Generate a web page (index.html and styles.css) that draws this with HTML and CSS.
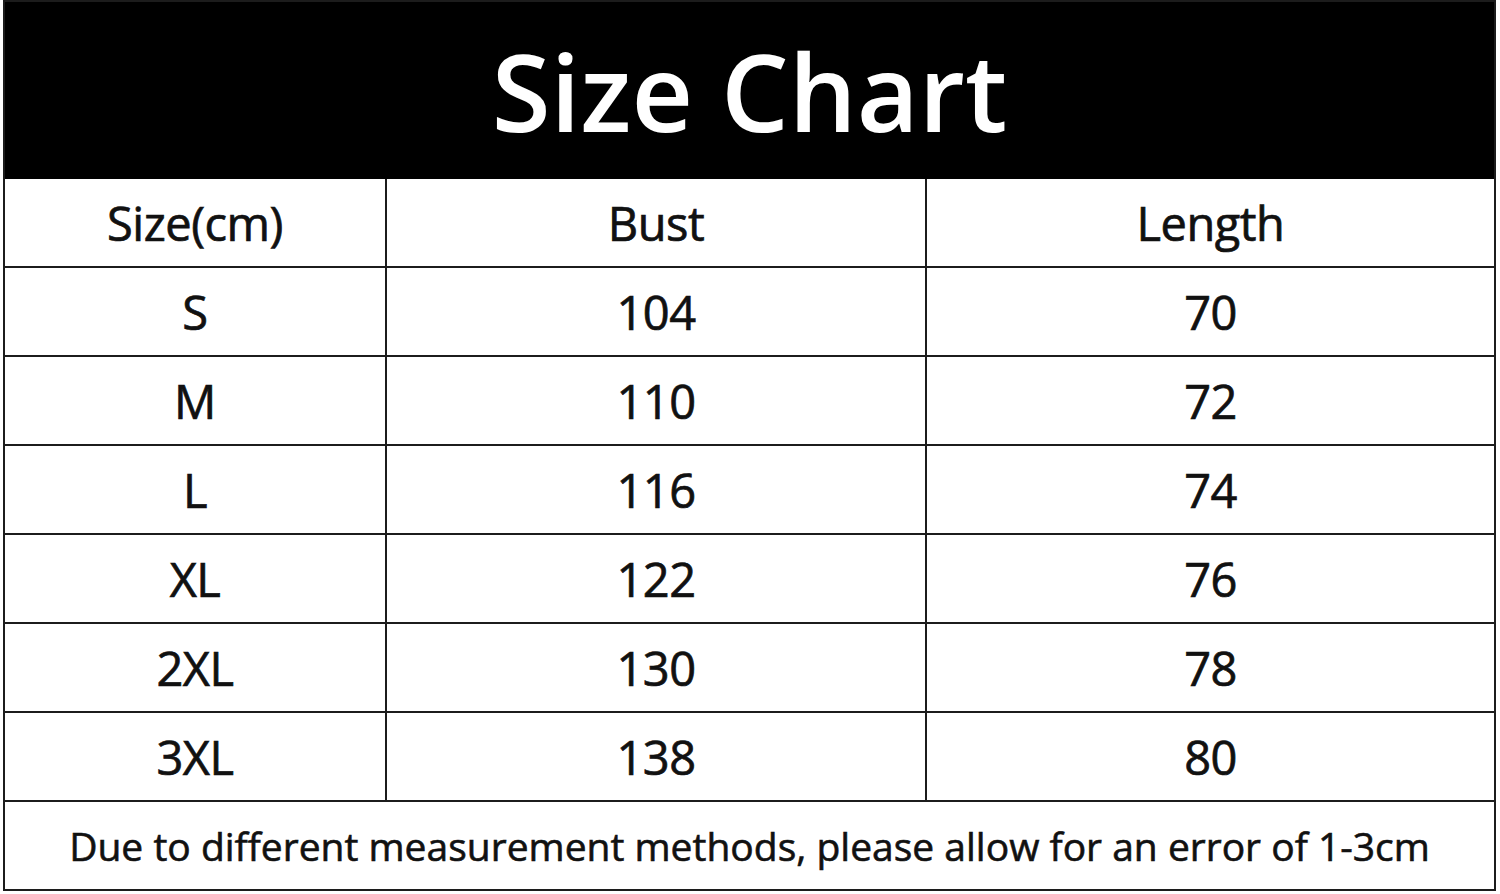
FILE: index.html
```html
<!DOCTYPE html>
<html>
<head>
<meta charset="utf-8">
<link rel="stylesheet" href="styles.css">
</head>
<body>
<div class="chart">
  <div class="title">Size Chart</div>
  <div class="grid">
    <div class="cell">Size(cm)</div><div class="cell">Bust</div><div class="cell">Length</div>
    <div class="cell">S</div><div class="cell">104</div><div class="cell">70</div>
    <div class="cell">M</div><div class="cell">110</div><div class="cell">72</div>
    <div class="cell">L</div><div class="cell">116</div><div class="cell">74</div>
    <div class="cell">XL</div><div class="cell">122</div><div class="cell">76</div>
    <div class="cell">2XL</div><div class="cell">130</div><div class="cell">78</div>
    <div class="cell">3XL</div><div class="cell">138</div><div class="cell">80</div>
  </div>
  <div class="note">Due to different measurement methods, please allow for an error of 1-3cm</div>
</div>
</body>
</html>
```
FILE: styles.css
```css
html, body {
  margin: 0;
  padding: 0;
  background: #fff;
}
body {
  font-family: "Open Sans", "Noto Sans", sans-serif;
  color: #111;
}
.chart {
  margin: 0 0 0 3px;
  width: 1489px;
  border: 2px solid #1c1c1c;
}
.title {
  height: 177px;
  background: #000;
  color: #fff;
  font-size: 107px;
  font-weight: 600;
  display: flex;
  align-items: center;
  justify-content: center;
  line-height: 1;
}
.grid {
  display: grid;
  grid-template-columns: 382px 540px 567px;
  grid-auto-rows: 89px;
}
.cell {
  display: flex;
  align-items: center;
  justify-content: center;
  font-size: 47px;
  letter-spacing: -0.5px;
  -webkit-text-stroke: 0.7px #111;
  border-bottom: 2px solid #1c1c1c;
  border-right: 2px solid #1c1c1c;
  box-sizing: border-box;
}
.cell:nth-child(3n) {
  border-right: none;
}
.note {
  height: 87px;
  display: flex;
  align-items: center;
  justify-content: center;
  font-size: 39px;
  -webkit-text-stroke: 0.6px #111;
}
```
